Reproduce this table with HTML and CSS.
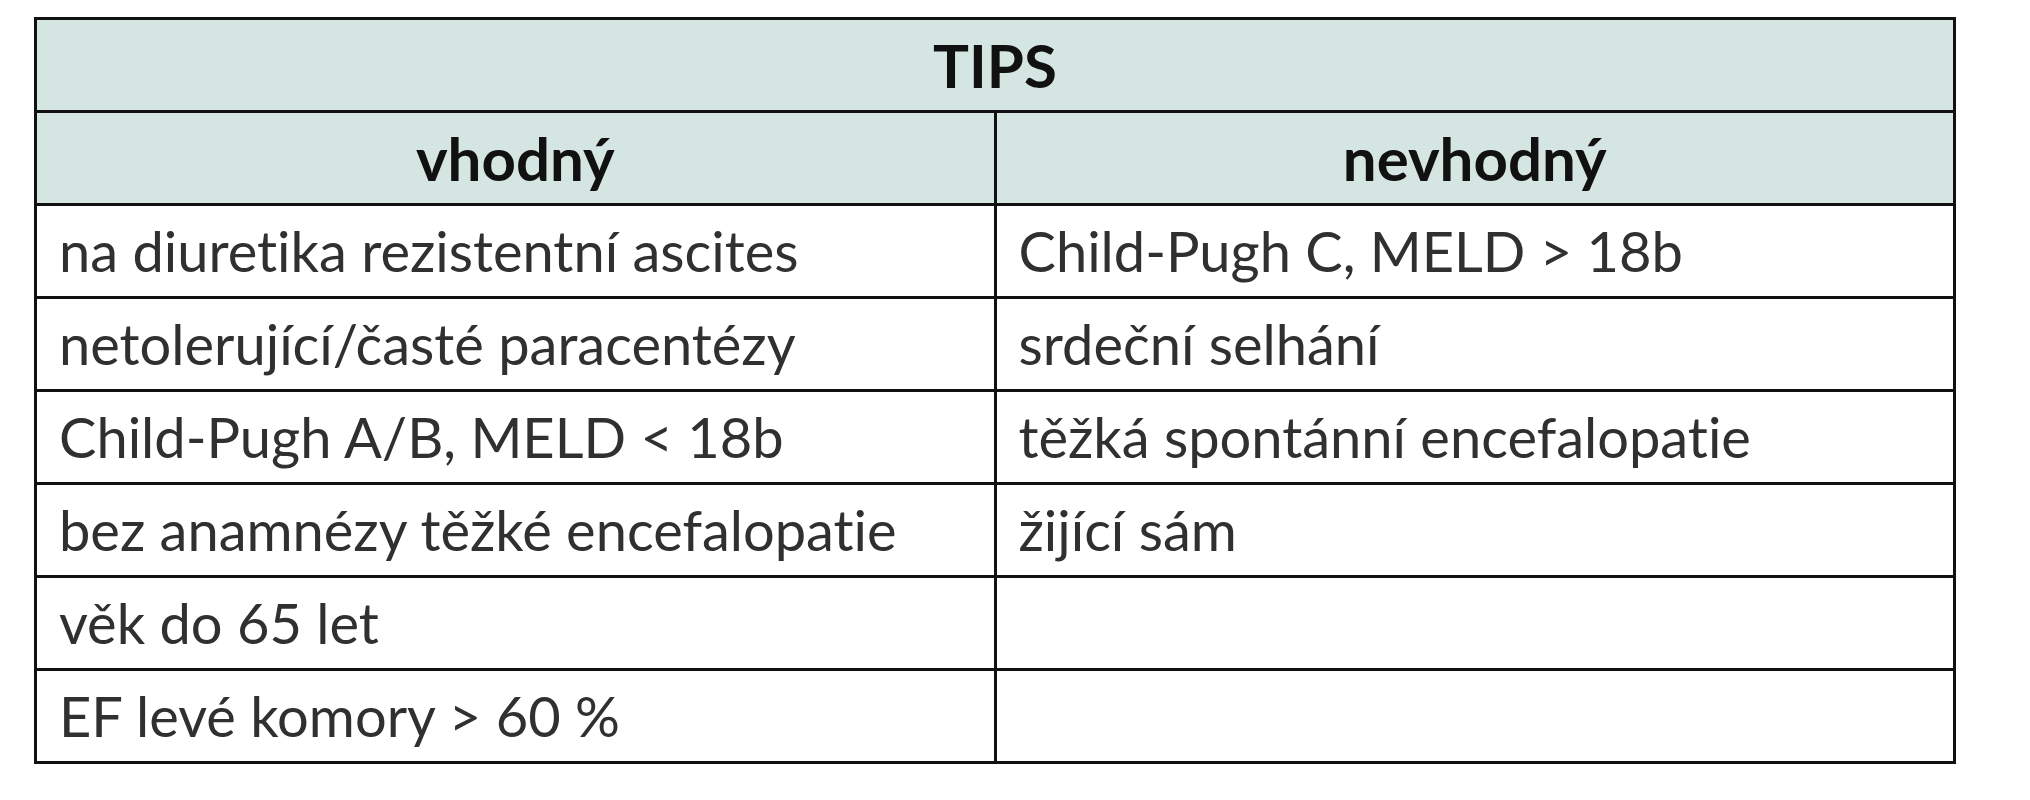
FILE: index.html
```html
<!DOCTYPE html>
<html lang="cs">
<head>
<meta charset="utf-8">
<title>TIPS</title>
<link rel="stylesheet" href="styles.css">
</head>
<body>
<table class="tips">
  <colgroup><col class="col"><col class="col"></colgroup>
  <thead>
    <tr class="head-row"><th colspan="2">TIPS</th></tr>
    <tr class="head-row"><th>vhodný</th><th>nevhodný</th></tr>
  </thead>
  <tbody>
    <tr><td>na diuretika rezistentní ascites</td><td>Child-Pugh C, MELD &gt; 18b</td></tr>
    <tr><td>netolerující/časté paracentézy</td><td>srdeční selhání</td></tr>
    <tr><td>Child-Pugh A/B, MELD &lt; 18b</td><td>těžká spontánní encefalopatie</td></tr>
    <tr><td>bez anamnézy těžké encefalopatie</td><td>žijící sám</td></tr>
    <tr><td>věk do 65 let</td><td></td></tr>
    <tr><td>EF levé komory &gt; 60 %</td><td></td></tr>
  </tbody>
</table>
</body>
</html>
```
FILE: styles.css
```css
html, body {
  margin: 0;
  background: #ffffff;
}

body {
  padding: 17px 0 0 34px;
}

.tips {
  border-collapse: collapse;
  table-layout: fixed;
  width: 1922px;
  font-family: Lato, "Open Sans", "Liberation Sans", sans-serif;
  font-size: 56px;
  font-variant-ligatures: none;
  color: #303030;
}

.tips .col {
  width: 50%;
}

.tips th,
.tips td {
  border: 3px solid #111111;
  height: 90px;
  box-sizing: border-box;
  padding: 0 0 0 22px;
  vertical-align: middle;
  white-space: nowrap;
  line-height: 1;
}

.tips tr {
  height: 93px;
}

.tips th {
  background: #d5e6e2;
  color: #111111;
  font-size: 60px;
  font-weight: 700;
  text-align: center;
  padding: 0;
}
```
